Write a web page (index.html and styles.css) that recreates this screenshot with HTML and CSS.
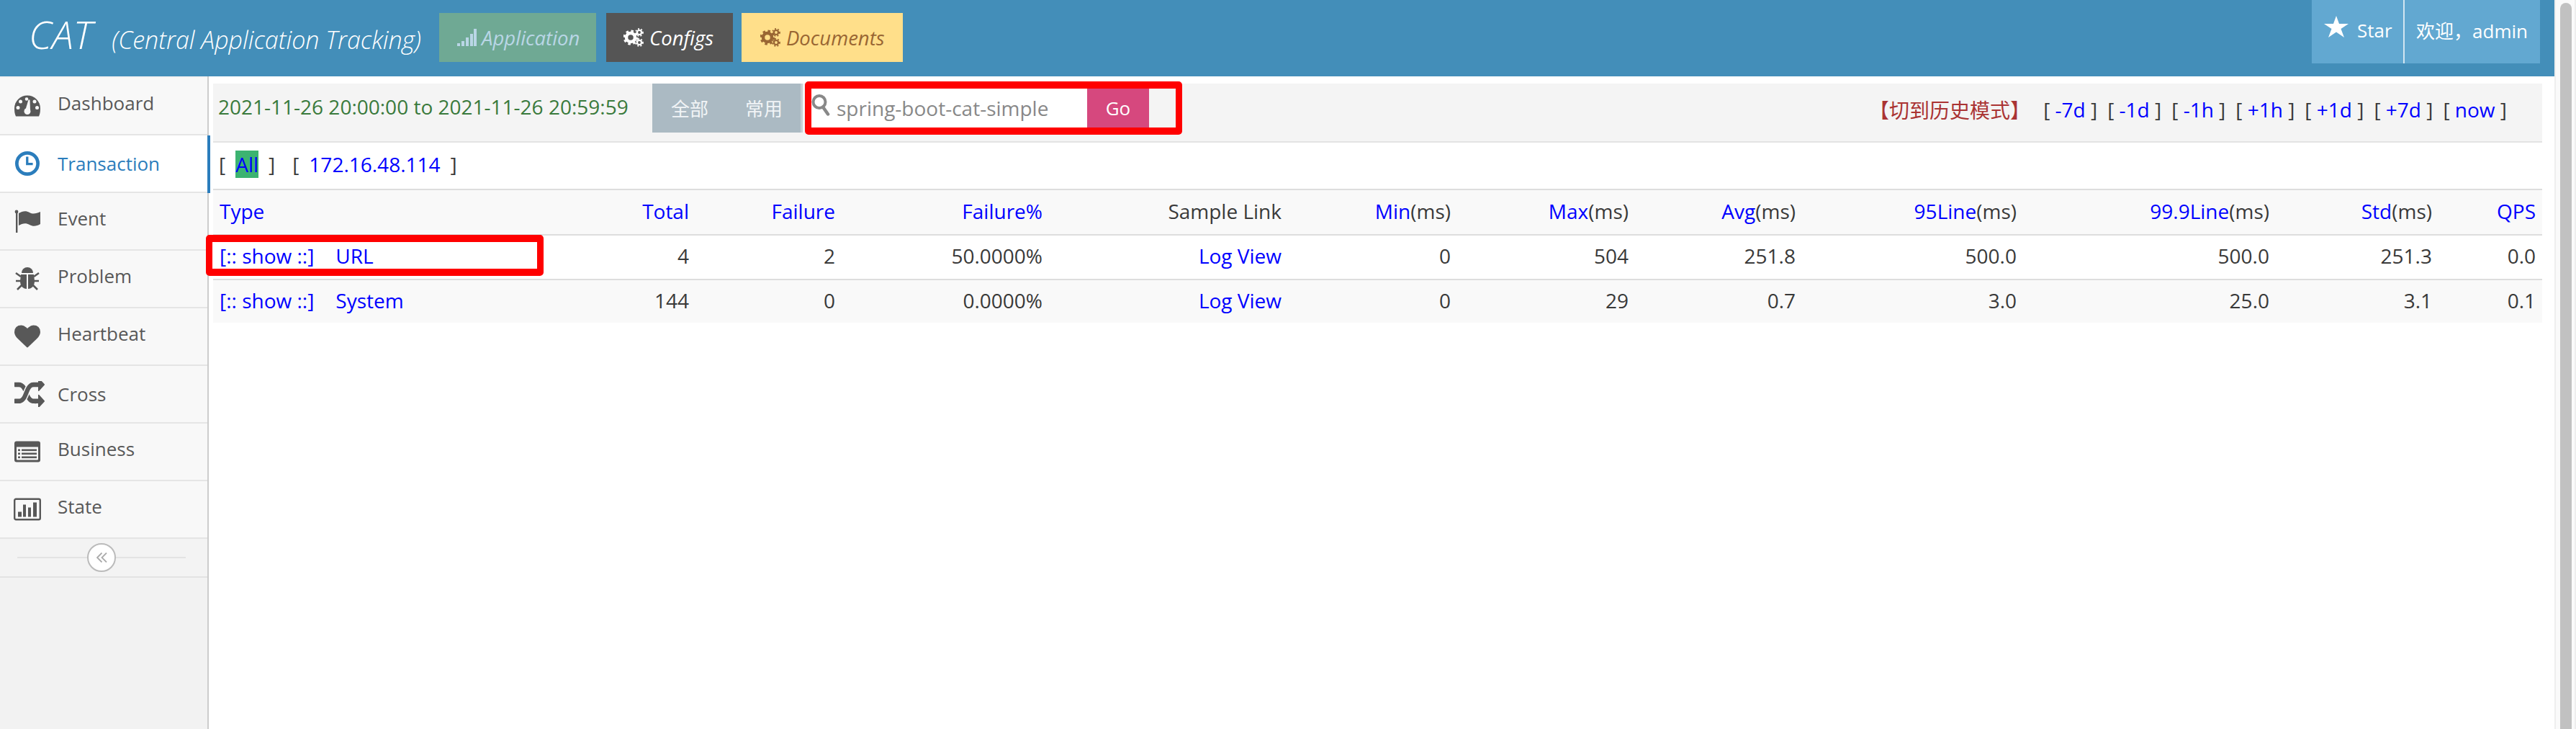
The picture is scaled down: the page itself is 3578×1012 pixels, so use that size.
FILE: index.html

```html
<!doctype html>
<html lang="en">
<head>
    <meta charset="utf-8">
    <link rel="stylesheet" href="styles.css">
    <title>CAT</title>
</head>
<body>
<svg class="defs" width="0" height="0">
    <symbol id="gears" viewBox="0 0 28 26">
        <circle cx="10" cy="13" r="6" fill="none" stroke="currentColor" stroke-width="4.5"></circle>
        <circle cx="10" cy="13" r="9" fill="none" stroke="currentColor" stroke-width="3" stroke-dasharray="3.5 3.6"></circle>
        <circle cx="22" cy="6" r="3" fill="none" stroke="currentColor" stroke-width="2.2"></circle>
        <circle cx="22" cy="6" r="5" fill="none" stroke="currentColor" stroke-width="1.8" stroke-dasharray="2 2.2"></circle>
        <circle cx="22" cy="20" r="3" fill="none" stroke="currentColor" stroke-width="2.2"></circle>
        <circle cx="22" cy="20" r="5" fill="none" stroke="currentColor" stroke-width="1.8" stroke-dasharray="2 2.2"></circle>
    </symbol>
</svg>
<div class="page">
    <header class="navbar">
        <div class="brand"><span class="brand-name">CAT</span><span class="brand-full">(Central Application Tracking)</span></div>
        <a class="nav-btn nav-app">
            <svg class="signal" viewBox="0 0 27 24"><rect x="0" y="20" width="4" height="4"></rect><rect x="6" y="17" width="4" height="7"></rect><rect x="12" y="12" width="4" height="12"></rect><rect x="18" y="7" width="4" height="17"></rect><rect x="23" y="0" width="4" height="24"></rect></svg>
            Application
        </a>
        <a class="nav-btn nav-config"><svg class="gears"><use href="#gears"></use></svg>Configs</a>
        <a class="nav-btn nav-docs"><svg class="gears"><use href="#gears"></use></svg>Documents</a>
        <div class="user-box">
            <a class="user-item star-item">
                <svg class="star" viewBox="0 0 34 30"><polygon points="17,0 21,11 34,11 23.500,18 28,30 17,22.500 6,30 10.500,18 0,11 13,11"></polygon></svg>
                Star
            </a>
            <a class="user-item">欢迎，admin</a>
        </div>
    </header>
    <div class="main">
        <nav class="sidebar">
            <a class="menu-item">
                <svg class="menu-icon" viewBox="0 0 36 29">
                    <path d="M0 18 A18 18 0 0 1 36 18 Q36 25 34 29 H2 Q0 25 0 18Z"></path>
                    <g class="holes">
                        <circle cx="8.500" cy="8.500" r="2.500"></circle><circle cx="28" cy="8.500" r="2.500"></circle>
                        <circle cx="5" cy="17" r="2.500"></circle><circle cx="31.500" cy="17" r="2.500"></circle>
                        <circle cx="17" cy="5" r="2.300"></circle>
                        <circle cx="18" cy="22" r="4.500"></circle><path d="M19.500 6 L21.500 6 L22 21 L15 21Z"></path>
                    </g>
                </svg>
                <span>Dashboard</span>
            </a>
            <a class="menu-item active">
                <svg class="menu-icon" viewBox="0 0 36 36">
                    <circle cx="18" cy="18" r="15.500" fill="none" stroke="currentColor" stroke-width="5"></circle>
                    <path d="M16 8 H19.500 V17 H26 V20.500 H16Z"></path>
                </svg>
                <span class="drop">Transaction</span>
            </a>
            <a class="menu-item">
                <svg class="menu-icon" viewBox="0 0 36 32">
                    <circle cx="3" cy="3" r="2.400"></circle><rect x="2" y="3" width="2.400" height="29"></rect>
                    <path d="M6 5 C11 2 16 1 21 4 C26 7 31 5 36 3 V20 C31 23 26 24 21 21 C16 18 11 19 6 22Z"></path>
                </svg>
                <span>Event</span>
            </a>
            <a class="menu-item">
                <svg class="menu-icon" viewBox="0 0 36 34">
                    <path d="M10 9 A8 8 0 0 1 26 9Z"></path>
                    <path d="M9 11 H17 V31 C12 31 8 27 8 20Z M19 11 H27 L28 20 C28 27 24 31 19 31Z"></path>
                    <path d="M2 9 L9 14 M34 9 L27 14 M2 20 H9 M34 20 H27 M4 32 L10 26 M32 32 L26 26" stroke="currentColor" stroke-width="2.600" fill="none"></path>
                </svg>
                <span>Problem</span>
            </a>
            <a class="menu-item">
                <svg class="menu-icon" viewBox="0 128 1792 1536"><path d="M896 1664q-26 0-44-18l-624-602q-10-8-27.500-26t-55.500-65.500-68-97.500-53.500-121-23.500-138q0-220 127-344t351-124q62 0 126.500 21.500t120 58 95.500 68.500 76 68q36-36 76-68t95.500-68.500 120-58 126.500-21.500q224 0 351 124t127 344q0 221-229 450l-623 600q-18 18-44 18z"></path></svg>
                <span>Heartbeat</span>
            </a>
            <a class="menu-item">
                <svg class="menu-icon wide" viewBox="0 192 1792 1408" preserveAspectRatio="none"><path d="M666 481q-60 92-137 273-22-45-37-72.500t-40.500-63.500-51-56.500-63-35-81-14.500h-224q-14 0-23-9t-9-23v-192q0-14 9-23t23-9h224q250 0 410 225zm1126 799q0 14-9 23l-320 320q-9 9-23 9-13 0-22.500-9.500t-9.500-22.500v-192q-32 0-85 .5t-81 1-73-1-71-5-64-10.500-63-18.500-58-28.500-59-40-55-53.500-56-69.500q59-93 136-273 22 45 37 72.500t40.500 63.500 51 56.500 63 35 81 14.500h256v-192q0-14 9-23t23-9q12 0 24 10l319 319q9 9 9 23zm0-896q0 14-9 23l-320 320q-9 9-23 9-13 0-22.500-9.500t-9.500-22.500v-192h-256q-48 0-87 15t-69 45-51 61.500-45 77.500q-32 62-78 171-29 66-49.500 111t-54 105-64 100-74 83-90 68.500-106.500 42-128 16.500h-224q-14 0-23-9t-9-23v-192q0-14 9-23t23-9h224q48 0 87-15t69-45 51-61.500 45-77.500q32-62 78-171 29-66 49.500-111t54-105 64-100 74-83 90-68.500 106.500-42 128-16.500h256v-192q0-14 9-23t23-9q12 0 24 10l319 319q9 9 9 23z"></path></svg>
                <span class="drop">Cross</span>
            </a>
            <a class="menu-item">
                <svg class="menu-icon" viewBox="0 0 36 29">
                    <path fill-rule="evenodd" d="M3 0 H33 Q36 0 36 3 V26 Q36 29 33 29 H3 Q0 29 0 26 V3 Q0 0 3 0Z M3 8 V25 Q3 26 4 26 H32 Q33 26 33 25 V8Z"></path>
                    <rect x="5" y="11" width="3" height="2.600"></rect><rect x="10" y="11" width="21" height="2.600"></rect>
                    <rect x="5" y="16" width="3" height="2.600"></rect><rect x="10" y="16" width="21" height="2.600"></rect>
                    <rect x="5" y="21" width="3" height="2.600"></rect><rect x="10" y="21" width="21" height="2.600"></rect>
                </svg>
                <span>Business</span>
            </a>
            <a class="menu-item">
                <svg class="menu-icon state" viewBox="0 0 38 31">
                    <rect x="1.200" y="1.200" width="35.600" height="28.600" rx="2" fill="none" stroke="currentColor" stroke-width="2.400"></rect>
                    <rect x="6" y="19" width="5" height="7"></rect><rect x="13" y="9" width="4" height="17"></rect>
                    <rect x="20" y="13" width="4" height="13"></rect><rect x="27" y="6" width="5" height="20"></rect>
                </svg>
                <span>State</span>
            </a>
            <div class="collapse-row">
                <span class="collapse-btn">
                    <svg class="collapse-icon" viewBox="0 0 15 14"><path d="M7.500 0.500 L1 7 L7.500 13.500 M14 0.500 L7.500 7 L14 13.500"></path></svg>
                </span>
            </div>
        </nav>
        <main class="content">
            <div class="toolbar">
                <span class="date-range">2021-11-26 20:00:00 to 2021-11-26 20:59:59</span>
                <div class="scope-group"><a>全部</a><a>常用</a></div>
                <form class="search">
                    <svg class="search-icon" viewBox="0 0 26 30">
                        <circle cx="11" cy="11" r="8.500" fill="none" stroke="currentColor" stroke-width="4"></circle>
                        <path d="M16 18 L23 28" stroke="currentColor" stroke-width="4.500" stroke-linecap="round"></path>
                    </svg>
                    <span class="search-value">spring-boot-cat-simple</span>
                    <button type="button" class="search-go">Go</button>
                    <span class="mark mark-search"></span>
                </form>
                <div class="history">
                    <span class="history-mode">【切到历史模式】</span>
                    <span class="steps">
                        <span>[ <a>-7d</a> ]</span>
                        <span>[ <a>-1d</a> ]</span>
                        <span>[ <a>-1h</a> ]</span>
                        <span>[ <a>+1h</a> ]</span>
                        <span>[ <a>+1d</a> ]</span>
                        <span>[ <a>+7d</a> ]</span>
                        <span>[ <a>now</a> ]</span>
                    </span>
                </div>
            </div>
            <div class="hosts">
                <span>[<a class="current">All</a>]</span>
                <span>[<a>172.16.48.114</a>]</span>
            </div>
            <table class="report">
                <colgroup>
                    <col class="c-type"><col class="c-total"><col class="c-fail"><col class="c-pct"><col class="c-link">
                    <col class="c-min"><col class="c-max"><col class="c-avg"><col class="c-95"><col class="c-999"><col class="c-std"><col class="c-qps">
                </colgroup>
                <thead>
                <tr>
                    <th class="left"><a>Type</a></th>
                    <th><a>Total</a></th>
                    <th><a>Failure</a></th>
                    <th><a>Failure%</a></th>
                    <th>Sample Link</th>
                    <th><a>Min</a>(ms)</th>
                    <th><a>Max</a>(ms)</th>
                    <th><a>Avg</a>(ms)</th>
                    <th><a>95Line</a>(ms)</th>
                    <th><a>99.9Line</a>(ms)</th>
                    <th><a>Std</a>(ms)</th>
                    <th><a>QPS</a></th>
                </tr>
                </thead>
                <tbody>
                <tr>
                    <td class="left type-cell"><a class="show">[:: show ::]</a><a>URL</a><span class="mark mark-row"></span></td>
                    <td>4</td><td>2</td><td>50.0000%</td><td><a>Log View</a></td>
                    <td>0</td><td>504</td><td>251.8</td><td>500.0</td><td>500.0</td><td>251.3</td><td>0.0</td>
                </tr>
                <tr>
                    <td class="left"><a class="show">[:: show ::]</a><a>System</a></td>
                    <td>144</td><td>0</td><td>0.0000%</td><td><a>Log View</a></td>
                    <td>0</td><td>29</td><td>0.7</td><td>3.0</td><td>25.0</td><td>3.1</td><td>0.1</td>
                </tr>
                </tbody>
            </table>
        </main>
    </div>
</div>
<div class="scrollbar"><div class="thumb"></div></div>
</body>
</html>
```

FILE: styles.css

```css
html, body {
    height: 100%;
    margin: 0;
    overflow: hidden;
}

body {
    display: flex;
    background-color: #fff;
    color: #393939;
    font-family: "Open Sans", "Noto Sans CJK SC", sans-serif;
    font-size: 28px;
}

* {
    box-sizing: border-box;
}

.defs {
    position: absolute;
}

.page {
    flex: 1;
    display: flex;
    flex-direction: column;
    min-width: 0;
}

/* top bar */
.navbar {
    display: flex;
    align-items: flex-start;
    height: 106px;
    background-color: #438eb9;
    color: #fff;
    flex: none;
}

.brand {
    display: flex;
    align-items: baseline;
    width: 610px;
    padding: 10px 0 0 40px;
    font-style: italic;
    font-weight: 300;
    white-space: nowrap;
}

.brand-name {
    font-size: 54px;
    margin-right: 27px;
}

.brand-full {
    font-size: 34px;
}

.nav-btn {
    display: flex;
    align-items: center;
    height: 68px;
    margin-top: 18px;
    margin-right: 12px;
    padding-left: 24px;
    font-size: 27.5px;
    font-style: italic;
    white-space: nowrap;
}

.nav-app {
    width: 218px;
    margin-right: 14px;
    background-color: #6fa994;
    color: #b9d6e6;
    padding-left: 25px;
}

.signal {
    width: 27px;
    height: 24px;
    margin-right: 7px;
    fill: currentColor;
}

.nav-config {
    width: 176px;
    background-color: #555;
}

.nav-docs {
    width: 224px;
    background-color: #ffdf8a;
    color: #996633;
    padding-left: 26px;
}

.gears {
    width: 28px;
    height: 26px;
    margin-right: 8px;
}

.user-box {
    display: flex;
    height: 88px;
    margin-left: auto;
    margin-right: 20px;
    background-color: #62a8d1;
    font-size: 26px;
}

.user-item {
    display: flex;
    align-items: center;
    padding: 0 17px 4px 16px;
    white-space: nowrap;
}

.star-item {
    width: 129px;
    border-right: 2px solid #d3e6f1;
    padding-right: 0;
    padding-left: 17px;
}

.star {
    width: 34px;
    height: 30px;
    margin: -10px 12px 0 0;
    fill: #fff;
}

/* side menu */
.main {
    flex: 1;
    display: flex;
    min-height: 0;
}

.sidebar {
    width: 290px;
    flex: none;
    padding-top: 2px;
    background-color: #f2f2f2;
    border-right: 2px solid #ccc;
    font-size: 26px;
}

.menu-item {
    position: relative;
    display: flex;
    align-items: center;
    height: 80px;
    padding-left: 20px;
    background-color: #f8f8f8;
    border-bottom: 2px solid #e5e5e5;
    color: #585858;
}

.menu-item span {
    margin: -9px 0 0 24px;
}

.menu-item .drop {
    margin-top: 0;
}

.menu-icon {
    width: 36px;
    height: 34px;
    flex: none;
    fill: currentColor;
}

.menu-icon.wide {
    width: 42px;
    height: 36px;
    margin-right: -6px;
}

.menu-icon.state {
    width: 38px;
    margin: 0 -1px 0 -1px;
}

.holes {
    fill: #f8f8f8;
}

.active {
    background-color: #fff;
    color: #2b7dbc;
}

.active::after {
    content: "";
    position: absolute;
    top: 0;
    bottom: -2px;
    right: -4px;
    width: 4px;
    background-color: #2b7dbc;
}

.collapse-row {
    position: relative;
    display: flex;
    align-items: center;
    justify-content: center;
    height: 54px;
    padding-right: 6px;
    background-color: #f3f3f3;
    border-bottom: 2px solid #e3e3e3;
}

.collapse-row::before {
    content: "";
    position: absolute;
    left: 24px;
    width: 234px;
    height: 2px;
    background-color: #e3e3e3;
}

.collapse-btn {
    position: relative;
    display: flex;
    align-items: center;
    justify-content: center;
    width: 40px;
    height: 40px;
    border: 2px solid #bbb;
    border-radius: 50%;
    background-color: #fff;
}

.collapse-icon {
    width: 15px;
    height: 14px;
    fill: none;
    stroke: #aaa;
    stroke-width: 1.8;
}

/* content */
.content {
    flex: 1;
    min-width: 0;
    padding: 10px 17px 0 6px;
}

.content a {
    color: #00f;
}

.toolbar {
    display: flex;
    align-items: flex-start;
    height: 82px;
    background-color: #f4f4f4;
    border-bottom: 2px solid #e3e3e3;
}

.date-range {
    width: 603px;
    margin: 13px 0 0 7px;
    color: #3a7a3c;
    white-space: nowrap;
}

.scope-group {
    display: flex;
    height: 68px;
    background-color: #abbac3;
    border-right: 3px solid #c6cfd5;
    font-size: 26px;
}

.content .scope-group a {
    display: flex;
    align-items: center;
    width: 103px;
    padding-left: 26px;
    color: #f1f4f6;
}

.search {
    position: relative;
    display: flex;
    align-items: center;
    width: 505px;
    height: 54px;
    margin: 7px 0 0 12px;
    background-color: #f4f4f4;
}

.search-icon {
    width: 26px;
    height: 54px;
    flex: none;
    padding: 7px 0 16px;
    color: #888;
}

.search-value {
    display: flex;
    align-items: center;
    width: 357px;
    height: 54px;
    padding-left: 9px;
    color: #888;
    white-space: nowrap;
}

.search-icon, .search-value {
    background-color: #fff;
}

.search-go {
    width: 86px;
    height: 54px;
    padding: 0;
    border: 0;
    background-color: #d6487e;
    color: #fff;
    font: inherit;
    font-size: 26px;
}

/* red annotation frames */
.mark {
    position: absolute;
    border: solid #f00;
    border-width: 10px 9px;
    border-radius: 5px;
    pointer-events: none;
}

.mark-search {
    top: -10px;
    bottom: -10px;
    left: -9px;
    right: -10px;
}

.mark-row {
    top: -1px;
    left: -10px;
    width: 469px;
    height: 57px;
}

.history {
    display: flex;
    align-items: center;
    margin: 16px 0 0 auto;
    padding-right: 49px;
    white-space: nowrap;
}

.history-mode {
    color: #a33;
    margin-right: 18px;
}

.steps {
    display: flex;
    gap: 14px;
}

.hosts {
    display: flex;
    align-items: center;
    gap: 24px;
    height: 66px;
    padding: 0 0 4px 8px;
    border-bottom: 2px solid #ddd;
}

.hosts a {
    display: inline-block;
    margin: 0 14px;
}

.hosts .current {
    background-color: #3cb371;
}

.report {
    width: 100%;
    border-collapse: collapse;
    table-layout: fixed;
}

.c-type { width: 400px; }
.c-total { width: 270px; }
.c-fail { width: 203px; }
.c-pct { width: 288px; }
.c-link { width: 332px; }
.c-min { width: 235px; }
.c-max { width: 247px; }
.c-avg { width: 232px; }
.c-95 { width: 307px; }
.c-999 { width: 351px; }
.c-std { width: 226px; }
.c-qps { width: 144px; }

.report th, .report td {
    height: 62px;
    padding: 0 9px 4px 0;
    text-align: right;
    font-weight: normal;
    white-space: nowrap;
    border-bottom: 2px solid #ddd;
}

.report th {
    background-color: #f9f9f9;
}

.report tbody tr:last-child td {
    height: 60px;
    background-color: #f9f9f9;
    border-bottom: 0;
}

.report .left {
    padding-left: 9px;
    text-align: left;
}

.type-cell {
    position: relative;
}

.show {
    margin-right: 30px;
}

/* drawn scrollbar */
.scrollbar {
    width: 30px;
    flex: none;
    padding: 4px 6px 0 6px;
    background-color: #fafafa;
    border-left: 2px solid #eee;
    border-right: 2px solid #eee;
}

.thumb {
    height: 100%;
    width: 16px;
    background-color: #c1c1c1;
    border-radius: 8px 8px 0 0;
}
```
